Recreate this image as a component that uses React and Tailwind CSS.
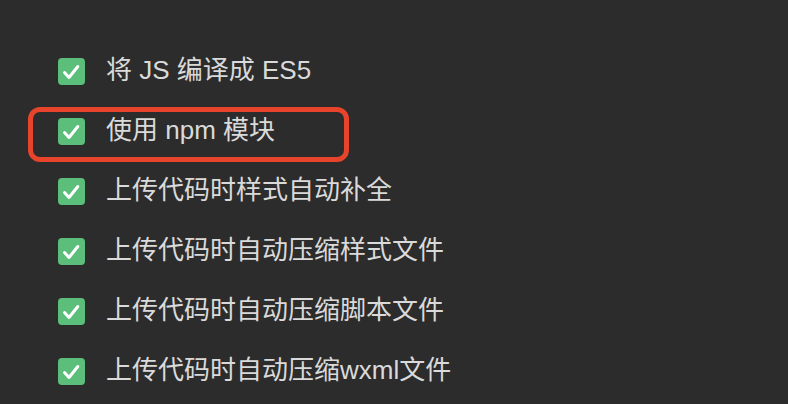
const options = [
  "将 JS 编译成 ES5",
  "使用 npm 模块",
  "上传代码时样式自动补全",
  "上传代码时自动压缩样式文件",
  "上传代码时自动压缩脚本文件",
  "上传代码时自动压缩wxml文件",
];

function Check() {
  return (
    <span className="flex h-[27px] w-[27px] shrink-0 items-center justify-center rounded-[4px] bg-[#5bbf7b]">
      <svg width="27" height="27" viewBox="0 0 27 27" fill="none">
        <path
          d="M6.5 14.5 L11 19.5 L19.8 8.5"
          stroke="white"
          strokeWidth="3"
          strokeLinecap="round"
          strokeLinejoin="round"
        />
      </svg>
    </span>
  );
}

export default function App() {
  return (
    <div
      className="h-[404px] w-[788px] overflow-hidden bg-[#2c2c2c] pl-[58px] pt-[41px]"
      style={{ fontFamily: '"Liberation Sans", "Noto Sans CJK SC", sans-serif' }}
    >
      {options.map((label, i) => (
        <div key={label} className="relative flex h-[60px] items-center gap-[21px]">
          {i === 1 && (
            <div className="absolute left-[-30px] top-[6px] h-[55px] w-[321px] rounded-[12px] border-[5px] border-[#e8432b]" />
          )}
          <Check />
          <span className="-mt-[2px] text-[26px] leading-none text-[#dadada]">{label}</span>
        </div>
      ))}
    </div>
  );
}
